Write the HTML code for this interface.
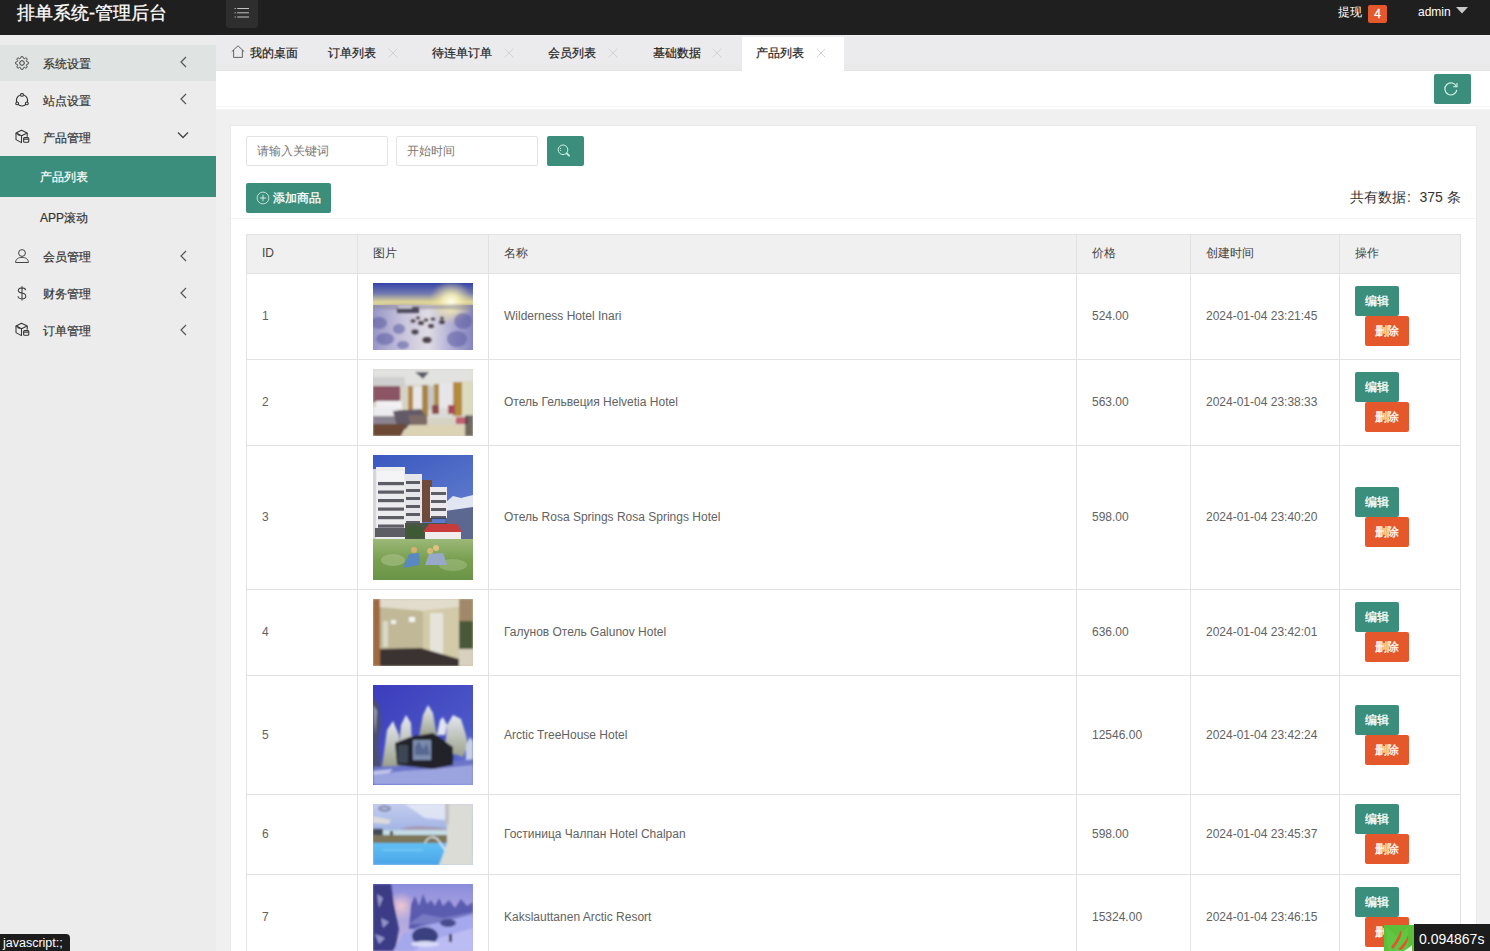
<!DOCTYPE html>
<html><head><meta charset="utf-8">
<style>
*{box-sizing:border-box;margin:0;padding:0}
html,body{width:1490px;height:951px;overflow:hidden}
body{font-family:"Liberation Sans",sans-serif;font-size:12px;color:#333;background:#eeeeee;position:relative}
.abs{position:absolute}
#hdr{left:0;top:0;width:1490px;height:35px;background:#1f1f1f}
#title{left:17px;top:0.5px;font-size:18px;line-height:24px;color:#fff;white-space:nowrap;-webkit-text-stroke:0.3px #fff}
#tog{left:226px;top:0;width:32px;height:28px;background:#2e2e2e;border-radius:0 0 3px 3px}
#side{left:0;top:35px;width:216px;height:916px;background:#ececec}
.nav{left:0;width:216px;height:37px;line-height:39px;font-size:12px;color:#333}
.nav .t{position:absolute;left:43px;top:0;-webkit-text-stroke:0.2px currentColor}
.nav svg{position:absolute}
.chev{position:absolute;left:179px;top:13px}
#tabs{left:216px;top:35px;width:1274px;height:36px;background:#ebeaed;border-bottom:1px solid #e2e2e2}
.tab{position:absolute;top:0;height:35px;line-height:36px;font-size:12px;color:#222;white-space:nowrap;-webkit-text-stroke:0.2px #222}
.x{position:absolute;top:12px}
#strip{left:216px;top:71px;width:1274px;height:39px;background:#fff;border-bottom:1px solid #f2f2f2}
#main{left:216px;top:110px;width:1274px;height:841px;background:#f0f0f0}
#card{left:231px;top:126px;width:1245px;height:825px;background:#fff}
.inp{position:absolute;top:136px;width:142px;height:30px;border:1px solid #e3e3e3;border-radius:2px;background:#fff;color:#777;line-height:28px;padding-left:10px;font-size:12px}
.gbtn{position:absolute;background:#3b8e7b;border-radius:2px;color:#fff}
table{position:absolute;left:246px;top:234px;border-collapse:collapse;table-layout:fixed;width:1215px}
td,th{border:1px solid #e2e2e2;padding:9px 15px;line-height:20px;font-weight:normal;text-align:left;font-size:12px;color:#555;vertical-align:middle}
th{background:#f0f0f0;color:#444}
td img,.ph{display:block;width:100px}
.be{position:absolute;width:44px;height:30px;line-height:30px;text-align:center;color:#fff;border-radius:2px;font-size:12px;-webkit-text-stroke:0.3px #fff}
.hl{left:246px;width:1215px;height:1px;background:#e2e2e2}
.vl{top:234px;width:1px;height:717px;background:#e2e2e2}
.cell{line-height:20px;font-size:12px;color:#626262;white-space:nowrap}
.th{color:#444}
.img{width:100px;background:#889;overflow:hidden}.img svg{display:block}
</style></head><body>
<div id="hdr" class="abs"></div>
<div id="title" class="abs">排单系统-管理后台</div>
<div id="tog" class="abs"></div>

<div id="side" class="abs"></div>

<!-- header extras -->
<svg class="abs" style="left:234px;top:7px" width="16" height="12" viewBox="0 0 16 12"><g stroke="#c4c4c4" stroke-width="1" fill="none"><path d="M3.2 1.5H15M3.2 5.8H15M3.2 10H15"/></g><g fill="#c4c4c4"><rect x="0.6" y="1" width="1.2" height="1"/><rect x="0.6" y="5.3" width="1.2" height="1"/><rect x="0.6" y="9.5" width="1.2" height="1"/></g></svg>
<div class="abs" style="left:1338px;top:3px;line-height:18px;color:#fff;font-size:12px">提现</div>
<div class="abs" style="left:1368px;top:5px;width:19px;height:18px;background:#e4582b;border-radius:2px;color:#fff;text-align:center;line-height:18px;font-size:12px;-webkit-text-stroke:0.3px #fff">4</div>
<div class="abs" style="left:1418px;top:3px;line-height:18px;color:#fff;font-size:12px">admin</div>
<svg class="abs" style="left:1456px;top:7px" width="12" height="7" viewBox="0 0 12 7"><path d="M0 0H12L6 6.5Z" fill="#c8c8c8"/></svg>

<!-- sidebar -->
<div class="abs" style="left:0;top:45px;width:216px;height:36px;background:#dfe3e1"></div>
<div class="abs nav" style="top:45px"><span class="t">系统设置</span></div>
<div class="abs nav" style="top:82px"><span class="t">站点设置</span></div>
<div class="abs nav" style="top:119px"><span class="t">产品管理</span></div>
<div class="abs" style="left:0;top:156px;width:216px;height:41px;background:#3b8e7b"></div>
<div class="abs nav" style="top:158px;color:#fff"><span class="t" style="left:40px">产品列表</span></div>
<div class="abs nav" style="top:199px"><span class="t" style="left:40px">APP滚动</span></div>
<div class="abs nav" style="top:238px"><span class="t">会员管理</span></div>
<div class="abs nav" style="top:275px"><span class="t">财务管理</span></div>
<div class="abs nav" style="top:312px"><span class="t">订单管理</span></div>
<!-- chevrons -->
<svg class="abs" style="left:179px;top:56px" width="9" height="12" viewBox="0 0 9 12"><path d="M7 1L2 6L7 11" stroke="#555" stroke-width="1.2" fill="none"/></svg>
<svg class="abs" style="left:179px;top:93px" width="9" height="12" viewBox="0 0 9 12"><path d="M7 1L2 6L7 11" stroke="#555" stroke-width="1.2" fill="none"/></svg>
<svg class="abs" style="left:177px;top:131px" width="12" height="9" viewBox="0 0 12 9"><path d="M1 1.5L6 6.5L11 1.5" stroke="#444" stroke-width="1.3" fill="none"/></svg>
<svg class="abs" style="left:179px;top:250px" width="9" height="12" viewBox="0 0 9 12"><path d="M7 1L2 6L7 11" stroke="#555" stroke-width="1.2" fill="none"/></svg>
<svg class="abs" style="left:179px;top:287px" width="9" height="12" viewBox="0 0 9 12"><path d="M7 1L2 6L7 11" stroke="#555" stroke-width="1.2" fill="none"/></svg>
<svg class="abs" style="left:179px;top:324px" width="9" height="12" viewBox="0 0 9 12"><path d="M7 1L2 6L7 11" stroke="#555" stroke-width="1.2" fill="none"/></svg>
<!-- icons -->
<svg class="abs" style="left:15px;top:56px" width="14" height="14" viewBox="0 0 14 14"><g fill="none" stroke="#333" stroke-width="1" stroke-linejoin="round"><path d="M13.60 7.00L13.59 7.26L13.55 7.52L13.45 7.76L13.19 7.98L12.64 8.12L12.09 8.22L11.81 8.36L11.69 8.52L11.60 8.70L11.53 8.88L11.45 9.05L11.39 9.24L11.36 9.44L11.46 9.74L11.78 10.19L12.07 10.68L12.10 11.02L12.00 11.27L11.84 11.48L11.67 11.67L11.48 11.84L11.27 12.00L11.02 12.10L10.68 12.07L10.19 11.78L9.74 11.46L9.44 11.36L9.24 11.39L9.05 11.45L8.88 11.53L8.70 11.60L8.52 11.69L8.36 11.81L8.22 12.09L8.12 12.64L7.98 13.19L7.76 13.45L7.52 13.55L7.26 13.59L7.00 13.60L6.74 13.59L6.48 13.55L6.24 13.45L6.02 13.19L5.88 12.64L5.78 12.09L5.64 11.81L5.48 11.69L5.30 11.60L5.12 11.53L4.95 11.45L4.76 11.39L4.56 11.36L4.26 11.46L3.81 11.78L3.32 12.07L2.98 12.10L2.73 12.00L2.52 11.84L2.33 11.67L2.16 11.48L2.00 11.27L1.90 11.02L1.93 10.68L2.22 10.19L2.54 9.74L2.64 9.44L2.61 9.24L2.55 9.05L2.47 8.88L2.40 8.70L2.31 8.52L2.19 8.36L1.91 8.22L1.36 8.12L0.81 7.98L0.55 7.76L0.45 7.52L0.41 7.26L0.40 7.00L0.41 6.74L0.45 6.48L0.55 6.24L0.81 6.02L1.36 5.88L1.91 5.78L2.19 5.64L2.31 5.48L2.40 5.30L2.47 5.12L2.55 4.95L2.61 4.76L2.64 4.56L2.54 4.26L2.22 3.81L1.93 3.32L1.90 2.98L2.00 2.73L2.16 2.52L2.33 2.33L2.52 2.16L2.73 2.00L2.98 1.90L3.32 1.93L3.81 2.22L4.26 2.54L4.56 2.64L4.76 2.61L4.95 2.55L5.12 2.47L5.30 2.40L5.48 2.31L5.64 2.19L5.78 1.91L5.88 1.36L6.02 0.81L6.24 0.55L6.48 0.45L6.74 0.41L7.00 0.40L7.26 0.41L7.52 0.45L7.76 0.55L7.98 0.81L8.12 1.36L8.22 1.91L8.36 2.19L8.52 2.31L8.70 2.40L8.88 2.47L9.05 2.55L9.24 2.61L9.44 2.64L9.74 2.54L10.19 2.22L10.68 1.93L11.02 1.90L11.27 2.00L11.48 2.16L11.67 2.33L11.84 2.52L12.00 2.73L12.10 2.98L12.07 3.32L11.78 3.81L11.46 4.26L11.36 4.56L11.39 4.76L11.45 4.95L11.53 5.12L11.60 5.30L11.69 5.48L11.81 5.64L12.09 5.78L12.64 5.88L13.19 6.02L13.45 6.24L13.55 6.48L13.59 6.74Z"/><circle cx="7" cy="7" r="2.3"/></g></svg>
<svg class="abs" style="left:15px;top:93px" width="14" height="14" viewBox="0 0 14 14"><g fill="none" stroke="#333" stroke-width="1.1"><circle cx="7" cy="7.4" r="5.6"/></g><g fill="#ececec" stroke="#333" stroke-width="1.1"><circle cx="7" cy="1.9" r="1.4"/><circle cx="2.2" cy="10.4" r="1.4"/><circle cx="11.8" cy="10.4" r="1.4"/></g></svg>
<svg class="abs" style="left:15px;top:129px" width="15" height="15" viewBox="0 0 15 15"><g fill="none" stroke="#333" stroke-width="1.05" stroke-linejoin="round"><path d="M1 4L6.5 1.3L12.2 4L6.5 6.8Z"/><path d="M1 4V10.6L6.5 13.6V6.8"/><path d="M12.2 4V7.8"/><path d="M2.6 5.2L4.8 6.2" stroke-width="1.5"/><rect x="8.6" y="8.6" width="5.2" height="4.6" rx="1"/><path d="M8.6 10.2H13.8"/></g></svg>
<svg class="abs" style="left:15px;top:249px" width="14" height="14" viewBox="0 0 14 14"><g fill="none" stroke="#444" stroke-width="1"><circle cx="7" cy="4" r="3.4"/><path d="M0.6 13.5C0.6 10 3.5 8.4 7 8.4S13.4 10 13.4 13.5Z"/></g></svg>
<svg class="abs" style="left:16px;top:286px" width="12" height="15" viewBox="0 0 12 15"><g fill="none" stroke="#444" stroke-width="1.1"><path d="M9.6 4.2C9.4 2.7 8 1.9 6 1.9S2.3 2.8 2.3 4.4C2.3 6.2 4 6.6 6 7S9.8 8 9.8 10.2C9.8 12 8.2 12.8 6 12.8S2.2 11.9 2 10.3M6 0.3V14.5"/></g></svg>
<svg class="abs" style="left:15px;top:322px" width="15" height="15" viewBox="0 0 15 15"><g fill="none" stroke="#333" stroke-width="1.05" stroke-linejoin="round"><path d="M1 4L6.5 1.3L12.2 4L6.5 6.8Z"/><path d="M1 4V10.6L6.5 13.6V6.8"/><path d="M12.2 4V7.8"/><path d="M2.6 5.2L4.8 6.2" stroke-width="1.5"/><rect x="8.6" y="8.6" width="5.2" height="4.6" rx="1"/><path d="M8.6 10.2H13.8"/></g></svg>

<div id="tabs" class="abs"></div>

<div class="abs" style="left:216px;top:64px;width:1274px;height:6px;background:#e9e9ea"></div>
<div class="abs" style="left:216px;top:35px;width:1274px;height:1px;background:#f1f1f3"></div>
<div class="abs" style="left:742px;top:37px;width:102px;height:34px;background:#fff"></div>
<svg class="abs" style="left:231px;top:45px" width="14" height="13" viewBox="0 0 14 13"><path d="M0.8 6.6L7 0.8L13.2 6.6M2.6 5V12.4H11.4V5" stroke="#555" stroke-width="0.9" fill="none"/></svg>
<div class="tab" style="left:250px;top:35px">我的桌面</div>
<div class="tab" style="left:328px;top:35px">订单列表</div><svg class="abs" style="left:388px;top:48px" width="10" height="10" viewBox="0 0 10 10"><path d="M0.7 0.7L9.3 9.3M9.3 0.7L0.7 9.3" stroke="#d2d2d2" stroke-width="1"/></svg>
<div class="tab" style="left:432px;top:35px">待连单订单</div><svg class="abs" style="left:504px;top:48px" width="10" height="10" viewBox="0 0 10 10"><path d="M0.7 0.7L9.3 9.3M9.3 0.7L0.7 9.3" stroke="#d2d2d2" stroke-width="1"/></svg>
<div class="tab" style="left:548px;top:35px">会员列表</div><svg class="abs" style="left:608px;top:48px" width="10" height="10" viewBox="0 0 10 10"><path d="M0.7 0.7L9.3 9.3M9.3 0.7L0.7 9.3" stroke="#d2d2d2" stroke-width="1"/></svg>
<div class="tab" style="left:653px;top:35px">基础数据</div><svg class="abs" style="left:712px;top:48px" width="10" height="10" viewBox="0 0 10 10"><path d="M0.7 0.7L9.3 9.3M9.3 0.7L0.7 9.3" stroke="#d2d2d2" stroke-width="1"/></svg>
<div class="tab" style="left:756px;top:35px">产品列表</div><svg class="abs" style="left:816px;top:48px" width="10" height="10" viewBox="0 0 10 10"><path d="M0.7 0.7L9.3 9.3M9.3 0.7L0.7 9.3" stroke="#d2d2d2" stroke-width="1"/></svg>
<div id="strip" class="abs"></div>

<div class="abs" style="left:216px;top:106px;width:1274px;height:1px;background:#f6f6f6"></div>
<div class="abs gbtn" style="left:1434px;top:74px;width:37px;height:30px"></div>
<svg class="abs" style="left:1443px;top:81px" width="16" height="16" viewBox="0 0 16 16"><path d="M13.4 5.6A6 6 0 1 0 13.8 8.8" stroke="#d8f6ec" stroke-width="1.1" fill="none"/><path d="M10.2 5.8H14V2" stroke="#d8f6ec" stroke-width="1.1" fill="none"/></svg>
<div id="main" class="abs"></div>

<div class="abs" style="left:230px;top:125px;width:1247px;height:826px;background:#e9e9e9"></div>
<div id="card" class="abs"></div>
<div class="inp" style="left:246px">请输入关键词</div>
<div class="inp" style="left:396px">开始时间</div>
<div class="gbtn" style="left:547px;top:136px;width:37px;height:30px"></div>
<svg class="abs" style="left:556px;top:143px" width="16" height="16" viewBox="0 0 16 16"><circle cx="7" cy="6.8" r="4.8" stroke="#d2f2e6" stroke-width="1" fill="none"/><path d="M10.4 10.2L13.6 13.2" stroke="#d2f2e6" stroke-width="1.6"/><path d="M4.6 5V7.8" stroke="#d2f2e6" stroke-width="1" stroke-dasharray="1 1"/></svg>
<div class="gbtn" style="left:246px;top:183px;width:85px;height:30px"></div>
<svg class="abs" style="left:256px;top:191px" width="14" height="14" viewBox="0 0 14 14"><circle cx="7" cy="7" r="5.9" stroke="#cfe6df" stroke-width="0.9" fill="none"/><path d="M7 3.8V10.2M3.8 7H10.2" stroke="#e8f3ef" stroke-width="0.9"/></svg>
<div class="abs" style="left:273px;top:188px;line-height:20px;color:#fff;font-size:12px;-webkit-text-stroke:0.3px #fff">添加商品</div>
<div class="abs" style="left:1350px;top:187px;line-height:20px;font-size:14px;color:#333;white-space:nowrap">共有数据<span style="margin-left:1px">:</span><span style="margin-left:8.5px">375 条</span></div>
<div class="abs" style="left:231px;top:218px;width:1245px;height:1px;background:#f3f3f3"></div>

<div class="abs" style="left:246px;top:235px;width:1214px;height:38px;background:#f0f0f0"></div>
<div class="abs hl" style="top:234px"></div>
<div class="abs hl" style="top:273px"></div>
<div class="abs hl" style="top:359px"></div>
<div class="abs hl" style="top:445px"></div>
<div class="abs hl" style="top:589px"></div>
<div class="abs hl" style="top:675px"></div>
<div class="abs hl" style="top:794px"></div>
<div class="abs hl" style="top:874px"></div>
<div class="abs vl" style="left:246px"></div>
<div class="abs vl" style="left:357px"></div>
<div class="abs vl" style="left:488px"></div>
<div class="abs vl" style="left:1076px"></div>
<div class="abs vl" style="left:1190px"></div>
<div class="abs vl" style="left:1339px"></div>
<div class="abs vl" style="left:1460px"></div>
<div class="abs cell th" style="left:262px;top:243px">ID</div>
<div class="abs cell th" style="left:373px;top:243px">图片</div>
<div class="abs cell th" style="left:504px;top:243px">名称</div>
<div class="abs cell th" style="left:1092px;top:243px">价格</div>
<div class="abs cell th" style="left:1206px;top:243px">创建时间</div>
<div class="abs cell th" style="left:1355px;top:243px">操作</div>
<div class="abs cell" style="left:262px;top:306.0px">1</div>
<div class="abs img im1" style="left:373px;top:283px;height:67px"><svg width="100" height="67" viewBox="0 0 100 67"><defs><linearGradient id="a1" x1="0" y1="0" x2="0" y2="1"><stop offset="0" stop-color="#3444a8"/><stop offset="0.45" stop-color="#7078b0"/><stop offset="0.8" stop-color="#d8d098"/><stop offset="1" stop-color="#e8dca0"/></linearGradient><radialGradient id="b1" cx="78" cy="19" r="22" gradientUnits="userSpaceOnUse"><stop offset="0" stop-color="#fffff0"/><stop offset="0.35" stop-color="#f8f0b8" stop-opacity="0.9"/><stop offset="1" stop-color="#e8d890" stop-opacity="0"/></radialGradient><linearGradient id="c1" x1="0" y1="0" x2="1" y2="0"><stop offset="0" stop-color="#9896c8"/><stop offset="0.3" stop-color="#c8c4dc"/><stop offset="0.55" stop-color="#e0dce4"/><stop offset="0.75" stop-color="#b8b6d8"/><stop offset="1" stop-color="#8684c0"/></linearGradient><filter id="f1"><feGaussianBlur stdDeviation="0.9"/></filter></defs><rect width="100" height="23" fill="url(#a1)"/><rect width="100" height="45" y="22" fill="url(#c1)"/><g filter="url(#f1)"><rect width="100" height="40" fill="url(#b1)"/><path d="M0 22L30 21L60 22L100 21V27L60 26L30 27L0 26Z" fill="#8a8698" opacity="0.55"/><rect x="24" y="24" width="22" height="6" fill="#4e4a5c"/><rect x="25" y="23" width="14" height="2.5" fill="#d0ccd8"/><g fill="#5a5aa0" opacity="0.55"><ellipse cx="6" cy="40" rx="8" ry="6"/><ellipse cx="12" cy="56" rx="9" ry="6"/><ellipse cx="26" cy="46" rx="6" ry="5"/><ellipse cx="90" cy="38" rx="9" ry="8"/><ellipse cx="84" cy="56" rx="10" ry="8"/><ellipse cx="30" cy="62" rx="6" ry="4"/></g><g fill="#4a4048"><ellipse cx="54" cy="57" rx="4.5" ry="3"/><ellipse cx="42" cy="49" rx="3.5" ry="2.4"/><ellipse cx="58" cy="43" rx="3" ry="2"/><ellipse cx="48" cy="40" rx="3" ry="2"/><ellipse cx="40" cy="38" rx="2.6" ry="1.8"/><ellipse cx="53" cy="37" rx="2.4" ry="1.6"/><ellipse cx="60" cy="36" rx="2.4" ry="1.6"/><ellipse cx="69" cy="39" rx="3" ry="2"/><ellipse cx="69" cy="35" rx="2.2" ry="1.5"/><ellipse cx="45" cy="35" rx="2" ry="1.4"/></g></g></svg></div>
<div class="abs cell" style="left:504px;top:306.0px">Wilderness Hotel Inari</div>
<div class="abs cell" style="left:1092px;top:306.0px">524.00</div>
<div class="abs cell" style="left:1206px;top:306.0px">2024-01-04 23:21:45</div>
<div class="be" style="left:1355px;top:286.0px;background:#3b8e7b">编辑</div>
<div class="be" style="left:1365px;top:316.0px;background:#e4582b">删除</div>
<div class="abs cell" style="left:262px;top:392.0px">2</div>
<div class="abs img im2" style="left:373px;top:369px;height:67px"><svg width="100" height="67" viewBox="0 0 100 67"><defs><filter id="f2"><feGaussianBlur stdDeviation="0.8"/></filter></defs><rect width="100" height="67" fill="#d6d2c4"/><g filter="url(#f2)"><rect width="100" height="16" fill="#e2e2e0"/><rect x="0" y="8" width="32" height="10" fill="#cfcfcf"/><rect x="34" y="15" width="58" height="34" fill="#dcdad4"/><rect x="35" y="17" width="5" height="24" fill="#b08840"/><rect x="40" y="18" width="9" height="26" fill="#e8e8e8"/><rect x="49" y="16" width="6" height="32" fill="#a88440"/><rect x="55" y="17" width="7" height="24" fill="#c8c6c8"/><rect x="61" y="15" width="5" height="24" fill="#b08c40"/><rect x="66" y="15" width="14" height="24" fill="#e6e6ea"/><rect x="80" y="13" width="9" height="34" fill="#b48a3a"/><rect x="89" y="12" width="11" height="34" fill="#dcdac0"/><rect x="0" y="17" width="27" height="16" fill="#8c5466"/><rect x="3" y="32" width="26" height="8" fill="#f2f0f2"/><rect x="0" y="38" width="24" height="12" fill="#ecebee"/><path d="M20 42L48 40L52 46L50 58L24 61Z" fill="#625a66"/><path d="M35 46H54V56L38 58Z" fill="#7c6c68"/><rect x="0" y="47" width="22" height="8" fill="#8a8490"/><path d="M0 55H34L28 67H0Z" fill="#6c4a34"/><path d="M28 67L36 56H100V67Z" fill="#dcd2b4"/><rect x="59" y="36" width="7" height="9" fill="#8c4a44"/><rect x="75" y="36" width="7" height="9" fill="#a84a54"/><rect x="83" y="48" width="12" height="7" fill="#c06070"/><path d="M42 3H56L50 10Z" fill="#383848" opacity="0.8"/><rect x="92" y="46" width="8" height="21" fill="#3e3a3a" opacity="0.7"/></g></svg></div>
<div class="abs cell" style="left:504px;top:392.0px">Отель Гельвеция Helvetia Hotel</div>
<div class="abs cell" style="left:1092px;top:392.0px">563.00</div>
<div class="abs cell" style="left:1206px;top:392.0px">2024-01-04 23:38:33</div>
<div class="be" style="left:1355px;top:372.0px;background:#3b8e7b">编辑</div>
<div class="be" style="left:1365px;top:402.0px;background:#e4582b">删除</div>
<div class="abs cell" style="left:262px;top:507.0px">3</div>
<div class="abs img im3" style="left:373px;top:455px;height:125px"><svg width="100" height="125" viewBox="0 0 100 125"><defs><linearGradient id="a3" x1="0" y1="0" x2="0.4" y2="1"><stop offset="0" stop-color="#3a58c0"/><stop offset="1" stop-color="#6e8ad0"/></linearGradient><linearGradient id="g3" x1="0" y1="0" x2="0" y2="1"><stop offset="0" stop-color="#9cb878"/><stop offset="0.5" stop-color="#78a050"/><stop offset="1" stop-color="#6a9448"/></linearGradient><filter id="f3"><feGaussianBlur stdDeviation="0.6"/></filter></defs><rect width="100" height="125" fill="url(#a3)"/><g filter="url(#f3)"><path d="M72 48L80 41L88 43L100 40V56L72 58Z" fill="#e2e6f2"/><path d="M72 56L86 54L100 52V84H72Z" fill="#5c6890"/><rect x="0" y="14" width="3" height="70" fill="#d8d4d8"/><rect x="3" y="12" width="29" height="72" fill="#ecebee"/><rect x="4" y="16" width="27" height="10" fill="#f4f4f6"/><rect x="32" y="19" width="17" height="52" fill="#e6e6ea"/><rect x="49" y="25" width="10" height="42" fill="#6e4c3a"/><rect x="57" y="32" width="17" height="31" fill="#eceaee"/><g fill="#3a3a44" opacity="0.8"><rect x="5" y="27" width="26" height="3.2"/><rect x="5" y="35.5" width="26" height="3.2"/><rect x="5" y="44" width="26" height="3.2"/><rect x="5" y="52.5" width="26" height="3.2"/><rect x="5" y="61" width="26" height="3.2"/><rect x="5" y="69.5" width="26" height="3.2"/><rect x="33" y="26" width="14" height="3"/><rect x="33" y="34" width="14" height="3"/><rect x="33" y="42" width="14" height="3"/><rect x="33" y="50" width="14" height="3"/><rect x="33" y="58" width="14" height="3"/><rect x="33" y="66" width="14" height="3"/><rect x="58" y="37" width="15" height="3"/><rect x="58" y="45" width="15" height="3"/><rect x="58" y="53" width="15" height="3"/><rect x="58" y="61" width="15" height="3"/><rect x="2" y="73" width="31" height="9"/></g><rect x="32" y="68" width="42" height="16" fill="#4a5444"/><ellipse cx="42" cy="77" rx="10" ry="6" fill="#3e5a34"/><rect x="52" y="76" width="36" height="10" fill="#f0ecec"/><path d="M50 77L56 69H84L89 77Z" fill="#c83a3e"/><rect x="0" y="84" width="100" height="41" fill="url(#g3)"/><ellipse cx="20" cy="105" rx="12" ry="6" fill="#a8c088" opacity="0.6"/><ellipse cx="80" cy="110" rx="14" ry="6" fill="#a8c088" opacity="0.5"/><path d="M30 113L36 99L46 98L47 110Z" fill="#5a88c0"/><circle cx="41" cy="95" r="3" fill="#d8b070"/><path d="M52 110L56 99L70 98L74 110Z" fill="#98a8c8"/><circle cx="57" cy="96" r="3" fill="#d8b878"/><circle cx="63" cy="93" r="3" fill="#e0c080"/></g></svg></div>
<div class="abs cell" style="left:504px;top:507.0px">Отель Rosa Springs Rosa Springs Hotel</div>
<div class="abs cell" style="left:1092px;top:507.0px">598.00</div>
<div class="abs cell" style="left:1206px;top:507.0px">2024-01-04 23:40:20</div>
<div class="be" style="left:1355px;top:487.0px;background:#3b8e7b">编辑</div>
<div class="be" style="left:1365px;top:517.0px;background:#e4582b">删除</div>
<div class="abs cell" style="left:262px;top:622.0px">4</div>
<div class="abs img im4" style="left:373px;top:599px;height:67px"><svg width="100" height="67" viewBox="0 0 100 67"><defs><filter id="f4"><feGaussianBlur stdDeviation="0.8"/></filter></defs><rect width="100" height="67" fill="#c9c2a4"/><g filter="url(#f4)"><path d="M6 0H86V8L50 12L6 9Z" fill="#e2dccc"/><path d="M6 8L50 12V52L6 58Z" fill="#c0b896"/><path d="M50 12L86 8V60L50 52Z" fill="#d2caa8"/><rect x="10" y="22" width="5" height="26" fill="#dcd8c8"/><rect x="57" y="14" width="13" height="42" fill="#e6e4da"/><rect x="36" y="18" width="6" height="5" fill="#f4f4f0"/><rect x="18" y="21" width="5" height="4" fill="#f0f0ec"/><path d="M6 50L48 49L86 60L86 67H6Z" fill="#3a3230"/><rect x="0" y="0" width="7" height="67" fill="#a06a40"/><rect x="86" y="0" width="14" height="67" fill="#a08868"/><rect x="86" y="22" width="14" height="30" fill="#4a5838"/><rect x="86" y="50" width="14" height="17" fill="#d8d0c0"/></g></svg></div>
<div class="abs cell" style="left:504px;top:622.0px">Галунов Отель Galunov Hotel</div>
<div class="abs cell" style="left:1092px;top:622.0px">636.00</div>
<div class="abs cell" style="left:1206px;top:622.0px">2024-01-04 23:42:01</div>
<div class="be" style="left:1355px;top:602.0px;background:#3b8e7b">编辑</div>
<div class="be" style="left:1365px;top:632.0px;background:#e4582b">删除</div>
<div class="abs cell" style="left:262px;top:724.5px">5</div>
<div class="abs img im5" style="left:373px;top:685px;height:100px"><svg width="100" height="100" viewBox="0 0 100 100"><defs><linearGradient id="a5" x1="0" y1="0" x2="1" y2="1"><stop offset="0" stop-color="#3c3cbc"/><stop offset="0.7" stop-color="#4c58c8"/><stop offset="1" stop-color="#7488d8"/></linearGradient><linearGradient id="t5" x1="0" y1="0" x2="0" y2="1"><stop offset="0" stop-color="#e4e8f0"/><stop offset="1" stop-color="#9aa08a"/></linearGradient><filter id="f5"><feGaussianBlur stdDeviation="1"/></filter></defs><rect width="100" height="100" fill="url(#a5)"/><g filter="url(#f5)"><path d="M0 12L6 20L8 40L5 60L8 82H0Z" fill="#4a5070"/><path d="M0 20L4 26L2 50Z" fill="#c8ccd8" opacity="0.6"/><path d="M9 82L14 45L20 36L26 50L28 82Z" fill="url(#t5)"/><path d="M24 82L28 40L33 30L38 38L40 82Z" fill="url(#t5)"/><path d="M46 52L50 30L55 20L60 28L64 52Z" fill="url(#t5)"/><path d="M64 50L67 35L70 32L74 40L72 50Z" fill="#dfe4f0"/><path d="M72 66L74 40L80 30L88 34L93 50L95 60L90 72Z" fill="url(#t5)"/><path d="M93 60L97 52L100 56V75H93Z" fill="#c8d0e8"/><path d="M0 82L40 80L70 78L100 74V100H0Z" fill="#6c74c8"/><path d="M0 90L30 86L60 84L100 80V100H0Z" fill="#9ca4e0"/><path d="M0 86L20 84L16 88L0 90Z" fill="#d8dcf4" opacity="0.8"/><path d="M22 58L37 52L60 48L80 62V80L60 84L24 80Z" fill="#232129"/><rect x="40" y="55" width="18" height="20" fill="#7c8cae"/><path d="M42 62L46 56L50 64L54 58L57 70H42Z" fill="#425080" opacity="0.6"/><rect x="25" y="60" width="10" height="18" fill="#3e4652"/></g></svg></div>
<div class="abs cell" style="left:504px;top:724.5px">Arctic TreeHouse Hotel</div>
<div class="abs cell" style="left:1092px;top:724.5px">12546.00</div>
<div class="abs cell" style="left:1206px;top:724.5px">2024-01-04 23:42:24</div>
<div class="be" style="left:1355px;top:704.5px;background:#3b8e7b">编辑</div>
<div class="be" style="left:1365px;top:734.5px;background:#e4582b">删除</div>
<div class="abs cell" style="left:262px;top:824.0px">6</div>
<div class="abs img im6" style="left:373px;top:804px;height:61px"><svg width="100" height="61" viewBox="0 0 100 61"><defs><linearGradient id="w6" x1="0" y1="0" x2="0" y2="1"><stop offset="0" stop-color="#60c0f4"/><stop offset="1" stop-color="#4aa4e8"/></linearGradient><linearGradient id="s6" x1="0" y1="0" x2="0" y2="1"><stop offset="0" stop-color="#c4cced"/><stop offset="0.5" stop-color="#9cb0e4"/><stop offset="1" stop-color="#b8d0e8"/></linearGradient><filter id="f6"><feGaussianBlur stdDeviation="0.8"/></filter></defs><rect width="100" height="61" fill="url(#s6)"/><g filter="url(#f6)"><path d="M32 0L52 14L72 16V0Z" fill="#e8ecf8" opacity="0.8"/><ellipse cx="11.5" cy="4.5" rx="5.5" ry="2" fill="none" stroke="#2a3050" stroke-width="0.9"/><path d="M0 12L18 16L16 20L0 19Z" fill="#e8e4d8" opacity="0.8"/><path d="M28 25C40 21 55 22 75 25V27H28Z" fill="#a890a8" opacity="0.8"/><rect x="0" y="26" width="76" height="5" fill="#c4dce4"/><rect x="0" y="25" width="10" height="8" fill="#404858"/><rect x="17" y="27" width="3" height="8" fill="#3a4050"/><rect x="0" y="31" width="76" height="8" fill="#7c7458"/><rect x="0" y="39" width="72" height="22" fill="url(#w6)"/><path d="M10 46H50" stroke="#90d8f8" stroke-width="1.5" opacity="0.6"/><path d="M74 0H100V61H66L74 40Z" fill="#dcdcd6"/><rect x="72" y="0" width="4" height="20" fill="#c0c0c4"/><path d="M52 39C55 32 61 31 66 37L72 46" stroke="#e8eef8" stroke-width="1.4" fill="none"/></g></svg></div>
<div class="abs cell" style="left:504px;top:824.0px">Гостиница Чалпан Hotel Chalpan</div>
<div class="abs cell" style="left:1092px;top:824.0px">598.00</div>
<div class="abs cell" style="left:1206px;top:824.0px">2024-01-04 23:45:37</div>
<div class="be" style="left:1355px;top:804.0px;background:#3b8e7b">编辑</div>
<div class="be" style="left:1365px;top:834.0px;background:#e4582b">删除</div>
<div class="abs cell" style="left:262px;top:907.0px">7</div>
<div class="abs img im7" style="left:373px;top:884px;height:67px"><svg width="100" height="67" viewBox="0 0 100 67"><defs><linearGradient id="a7" x1="0" y1="0" x2="0" y2="1"><stop offset="0" stop-color="#8a8cdc"/><stop offset="0.5" stop-color="#b0a8e0"/><stop offset="1" stop-color="#c4b4dc"/></linearGradient><radialGradient id="p7" cx="28" cy="22" r="14" gradientUnits="userSpaceOnUse"><stop offset="0" stop-color="#f0c8d0"/><stop offset="1" stop-color="#f0c8d0" stop-opacity="0"/></radialGradient><filter id="f7"><feGaussianBlur stdDeviation="0.9"/></filter></defs><rect width="100" height="67" fill="url(#a7)"/><g filter="url(#f7)"><rect width="60" height="40" fill="url(#p7)"/><path d="M36 45L38 20L42 12L46 22L50 10L54 20L58 16L62 22L66 14L70 22L76 16L82 24L88 15L94 22L100 18V45Z" fill="#5a5cb0"/><path d="M36 40L50 30L70 34L100 28V40Z" fill="#8a8ed0" opacity="0.6"/><path d="M0 0H18L21 20L26 45L22 67H0Z" fill="#3a3a86"/><path d="M4 10L10 14L6 24Z M8 34L16 38L10 44Z M2 50L12 54L6 60Z" fill="#b8bce8" opacity="0.7"/><path d="M20 67L30 50L48 42L70 38L100 30V67Z" fill="#a4a8ec"/><path d="M40 67L60 56L100 44V67Z" fill="#bcbcf4"/><ellipse cx="52" cy="52" rx="13" ry="9" fill="#3a4080"/><ellipse cx="52" cy="60" rx="14" ry="3" fill="#d8dcf8"/><ellipse cx="75" cy="39" rx="8" ry="4" fill="#464c90"/><rect x="76" y="50" width="3" height="8" fill="#303050"/></g></svg></div>
<div class="abs cell" style="left:504px;top:907.0px">Kakslauttanen Arctic Resort</div>
<div class="abs cell" style="left:1092px;top:907.0px">15324.00</div>
<div class="abs cell" style="left:1206px;top:907.0px">2024-01-04 23:46:15</div>
<div class="be" style="left:1355px;top:887.0px;background:#3b8e7b">编辑</div>
<div class="be" style="left:1365px;top:917.0px;background:#e4582b">删除</div>

<div class="abs" style="left:0;top:934px;width:70px;height:17px;padding-left:3px;background:#1c1c1c;color:#fff;font-size:12.5px;line-height:18px;border-radius:0 4px 0 0">javascript:;</div>
<div class="abs" style="left:1414px;top:924px;width:76px;height:27px;background:#1c1c1c"></div>
<div class="abs" style="left:1419px;top:929px;font-size:14px;line-height:20px;color:#fff;white-space:nowrap">0.094867s</div>
<svg class="abs" style="left:1384px;top:925px" width="30" height="26" viewBox="0 0 30 26"><rect width="30" height="26" fill="#5bbf3a"/><path d="M2 2L14 12L24 2V26H4Z" fill="#66d04a" opacity="0.5"/><path d="M7 22C12 16 15 10 17 5C19 10 14 18 9 24Z" fill="#e0552e"/><path d="M14 24C19 20 23 14 24 10C25 15 22 21 17 25Z" fill="#e0552e"/><path d="M20 26C23 24 26 22 28 20V26Z" fill="#e8f4e0"/></svg>
</body></html>
